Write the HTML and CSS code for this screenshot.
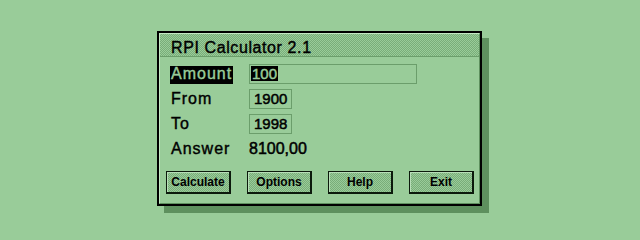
FILE: index.html
```html
<!DOCTYPE html>
<html lang="en">
<head>
    <meta charset="UTF-8">
    <title>RPI Calculator 2.1</title>
    <link rel="stylesheet" href="styles.css">
</head>
<body>

    <div class="window">
        <div class="frame">
            <div class="titlebar">RPI Calculator 2.1</div>

            <div class="form">
                <div class="label selected">Amount</div>
                <div class="field wide"><span class="sel">100</span></div>

                <div class="label">From</div>
                <div class="field short">1900</div>

                <div class="label">To</div>
                <div class="field short">1998</div>

                <div class="label">Answer</div>
                <div class="answer">8100,00</div>
            </div>

            <div class="buttons">
                <button class="btn">Calculate</button>
                <button class="btn">Options</button>
                <button class="btn">Help</button>
                <button class="btn">Exit</button>
            </div>
        </div>
    </div>

</body>
</html>
```

FILE: styles.css
```css
body {
    margin: 0;
    padding: 31px 0 0 157px;
    width: 640px;
    height: 240px;
    box-sizing: border-box;
    background-color: #99cc99;
    font-family: "Liberation Sans", Arial, sans-serif;
    color: #000;
    overflow: hidden;
}

.window {
    width: 325px;
    border: 2px solid #000;
    box-sizing: border-box;
    background-color: #99cc99;
    box-shadow: 7px 7px 0 #5e905e;
}

.frame {
    border: 1px solid;
    border-color: #c4e8c4 #5e905e #5e905e #c4e8c4;
}

.titlebar {
    height: 23px;
    box-sizing: border-box;
    padding: 5px 0 0 11px;
    line-height: 17px;
    font-size: 16px;
    letter-spacing: 0.6px;
    -webkit-text-stroke: 0.4px #000;
    border-bottom: 1px solid #6b9e6b;
    background: repeating-conic-gradient(#79ad79 0 25%, #99cc99 0 50%) 0 0 / 2px 2px;
}

.form {
    display: grid;
    grid-template-columns: 79px 1fr;
    grid-auto-rows: 25px;
    padding: 7px 0 0 10px;
}

.label {
    align-self: start;
    justify-self: start;
    height: 20px;
    line-height: 20px;
    font-size: 16px;
    letter-spacing: 1px;
    padding: 0 1px;
    -webkit-text-stroke: 0.4px #000;
}

.label.selected {
    margin-top: 2px;
    height: 18px;
    line-height: 16px;
    background-color: #000;
    color: #99cc99;
    -webkit-text-stroke: 0.4px #99cc99;
}

.field {
    justify-self: start;
    height: 20px;
    box-sizing: border-box;
    border: 1px solid #6b9e6b;
    padding-left: 4px;
    font-size: 15px;
    line-height: 18px;
    -webkit-text-stroke: 0.5px #000;
}

.field.wide {
    width: 168px;
}

.field.short {
    width: 43px;
}

.sel {
    margin-left: -3px;
    padding: 0 1px;
    display: inline-block;
    line-height: 15px;
    background-color: #000;
    color: #99cc99;
    -webkit-text-stroke: 0.5px #99cc99;
}

.answer {
    height: 20px;
    line-height: 20px;
    font-size: 16px;
    -webkit-text-stroke: 0.5px #000;
}

.buttons {
    display: flex;
    gap: 16px;
    padding: 7px 0 9px 6px;
}

.btn {
    width: 65px;
    height: 23px;
    box-sizing: border-box;
    padding: 0;
    border: 1px solid #0c1a0c;
    border-right-width: 2px;
    border-bottom-width: 2px;
    box-shadow: inset 1px 1px 0 #b8deb8;
    background: repeating-conic-gradient(#79ad79 0 25%, #99cc99 0 50%) 0 0 / 2px 2px;
    font-family: "Liberation Sans", Arial, sans-serif;
    font-size: 12px;
    font-weight: bold;
    color: #000;
}
```
